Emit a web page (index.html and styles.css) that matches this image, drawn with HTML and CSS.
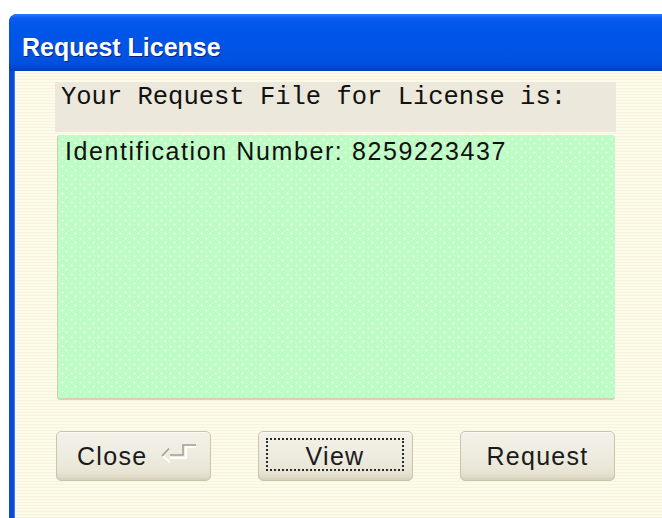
FILE: index.html
```html
<!DOCTYPE html>
<html>
<head>
<meta charset="utf-8">
<title>Request License</title>
<link rel="stylesheet" href="styles.css">
</head>
<body>
<div class="window">
  <div class="titlebar">Request License</div>
  <div class="client">
    <div class="prompt">Your Request File for License is:</div>
    <div class="memo">Identification Number: 8259223437</div>
    <div class="buttons">
      <button class="btn btn-close">
        <span>Close</span>
        <svg class="enter-icon" width="36" height="24" viewBox="0 0 36 24">
          <!-- light face of the return arrow -->
          <path d="M2 13 L9 19.5 M9 15 H25 V4 H35" fill="none" stroke="#ffffff" stroke-width="2"/>
          <!-- grey edge of the return arrow -->
          <path d="M1 13 L8 5.5 M9 12 H22 V2 H35" fill="none" stroke="#9e9e96" stroke-width="1.5"/>
        </svg>
      </button>
      <button class="btn btn-view"><span class="focus">View</span></button>
      <button class="btn btn-request">Request</button>
    </div>
  </div>
</div>
</body>
</html>
```
FILE: styles.css
```css
html, body {
  margin: 0;
  padding: 0;
  background: #ffffff;
  overflow: hidden;
  width: 662px;
  height: 518px;
}

.window {
  margin: 14px 0 0 9px;
  width: 660px;
  height: 520px;
  display: flex;
  flex-direction: column;
  border-radius: 8px 8px 0 0;
  overflow: hidden;
  background: #0a4ad8;
}

.titlebar {
  height: 57px;
  flex: none;
  box-sizing: border-box;
  padding: 19px 0 0 13px;
  color: #ffffff;
  font-family: "Liberation Sans", Arial, sans-serif;
  font-weight: bold;
  font-size: 25px;
  line-height: 28px;
  text-shadow: 1px 1px 0 #0a1f80;
  background: linear-gradient(to bottom,
    #2f7cff 0px, #0a5cf2 4px, #0057ea 10px, #0054e6 30px,
    #0051e0 48px, #0047cc 54px, #003fbb 57px);
}

.client {
  flex: 1;
  margin-left: 5px;
  border-left: 1px solid #3c7cf0;
  box-sizing: border-box;
  padding: 11px 0 0 40px;
  display: flex;
  flex-direction: column;
  background:
    repeating-linear-gradient(to bottom,
      #fdfbea 0px, #fdfbea 2px, #f7f3de 2px, #f7f3de 3px);
}

.prompt {
  width: 561px;
  height: 50px;
  box-sizing: border-box;
  padding: 1px 0 0 6px;
  background: #ece9dc;
  font-family: "Liberation Mono", "Courier New", monospace;
  font-size: 25.5px;
  line-height: 30px;
  color: #111111;
  white-space: nowrap;
}

.memo {
  margin: 3px 0 0 2px;
  width: 558px;
  height: 265px;
  box-sizing: border-box;
  padding: 1px 0 0 7px;
  border-radius: 3px;
  border-left: 1px solid #cfcbb0;
  border-bottom: 2px solid #d6d2b4;
  background-color: #bdfcc4;
  background-image:
    radial-gradient(circle, rgba(255,255,255,0.55) 0.9px, transparent 1.4px),
    radial-gradient(circle, rgba(255,255,255,0.55) 0.9px, transparent 1.4px);
  background-size: 9px 9px, 9px 9px;
  background-position: 0 0, 4px 4px;
  font-family: "Liberation Sans", Arial, sans-serif;
  font-size: 25px;
  letter-spacing: 1.6px;
  line-height: 30px;
  color: #111111;
}

.buttons {
  margin-top: 31px;
  margin-left: 1px;
  display: flex;
}

.btn {
  width: 155px;
  height: 50px;
  box-sizing: border-box;
  border: 1px solid #cbc5aa;
  border-radius: 5px;
  background: linear-gradient(to bottom,
    #f4f2e8 0%, #efede2 40%, #e9e6d6 80%, #dcd7c2 100%);
  box-shadow: inset 0 -2px 0 #d8d2bc, inset 0 1px 0 #fbfaf4;
  font-family: "Liberation Sans", Arial, sans-serif;
  font-size: 25px;
  letter-spacing: 1.3px;
  line-height: 30px;
  color: #1a1a1a;
  padding: 0 0 1px 0;
  display: flex;
  align-items: center;
  justify-content: center;
}

.btn-close {
  justify-content: flex-start;
  padding-left: 20px;
  gap: 14px;
}

.enter-icon {
  display: block;
  margin-top: -2px;
}

.btn-view {
  margin-left: 47px;
  padding: 6px 8px 9px 7px;
}

.focus {
  flex: 1;
  align-self: stretch;
  border: 2px dotted #2a2a2a;
  display: flex;
  align-items: center;
  justify-content: center;
  padding-top: 2px;
}

.btn-request {
  margin-left: 47px;
}
```
